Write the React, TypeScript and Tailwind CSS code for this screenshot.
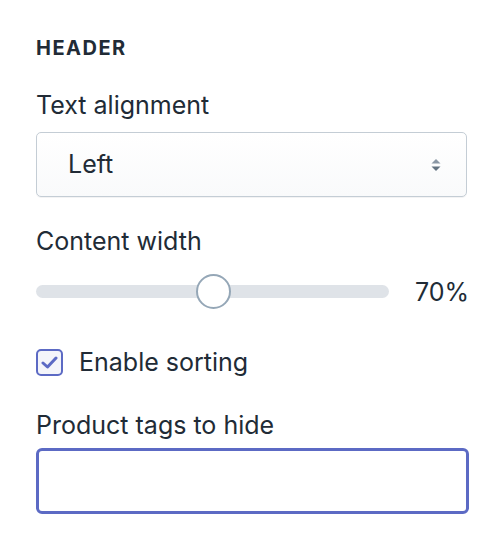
import React from "react";

export default function App() {
  const font = { fontFamily: "Inter, 'Noto Sans', sans-serif" };
  return (
    <div className="w-[500px] h-[548px] bg-white text-[#212b36] pl-[36px] pr-[30px] pt-[36px]" style={font}>
      <div className="h-[24px] leading-[24px] text-[20px] font-bold tracking-[0.075em] text-[#212b36]">HEADER</div>

      <div className="mt-[29px] h-[32px] leading-[32px] text-[25px]">Text alignment</div>
      <div className="mt-[11px] h-[65px] w-[431px] rounded-[5px] border border-[#c4cdd5] bg-gradient-to-b from-white to-[#f9fafb] flex items-center justify-between pl-[31px] pr-[25px] shadow-[0_1px_0_rgba(22,29,37,0.05)]">
        <span className="text-[25px] text-[#212b36]">Left</span>
        <svg width="10" height="14" viewBox="0 0 10 14">
          <path d="M5 1 L9.5 5.5 L0.5 5.5 Z" fill="#8a97a5" />
          <path d="M0.5 8.5 L9.5 8.5 L5 13 Z" fill="#637381" />
        </svg>
      </div>

      <div className="mt-[28px] h-[32px] leading-[32px] text-[25px]">Content width</div>
      <div className="mt-[17px] h-[35px] flex items-center">
        <div className="relative shrink-0 w-[353px] h-[13px] rounded-full bg-[#dfe3e8]">
          <div className="absolute left-[160px] top-[-11px] w-[35px] h-[35px] rounded-full bg-white border-2 border-[#95a7b7]" />
        </div>
        <span className="ml-[26px] shrink-0 text-[25px] leading-[32px]">70%</span>
      </div>

      <div className="mt-[39px] h-[28px] flex items-center">
        <div className="w-[27px] h-[27px] rounded-[5px] border-2 border-[#5c6ac4] bg-[#f4f5fa] flex items-center justify-center">
          <svg width="17" height="13" viewBox="0 0 17 13">
            <path d="M2 7 L6.5 11 L15 2" stroke="#5c6ac4" strokeWidth="3" fill="none" strokeLinecap="round" strokeLinejoin="round" />
          </svg>
        </div>
        <span className="ml-[16px] text-[25px] leading-[32px]">Enable sorting</span>
      </div>

      <div className="mt-[33px] h-[32px] leading-[32px] text-[25px]">Product tags to hide</div>
      <div className="mt-[7px] h-[66px] w-[433px] rounded-[6px] border-[3px] border-[#5c6ac4] bg-white" />
    </div>
  );
}
